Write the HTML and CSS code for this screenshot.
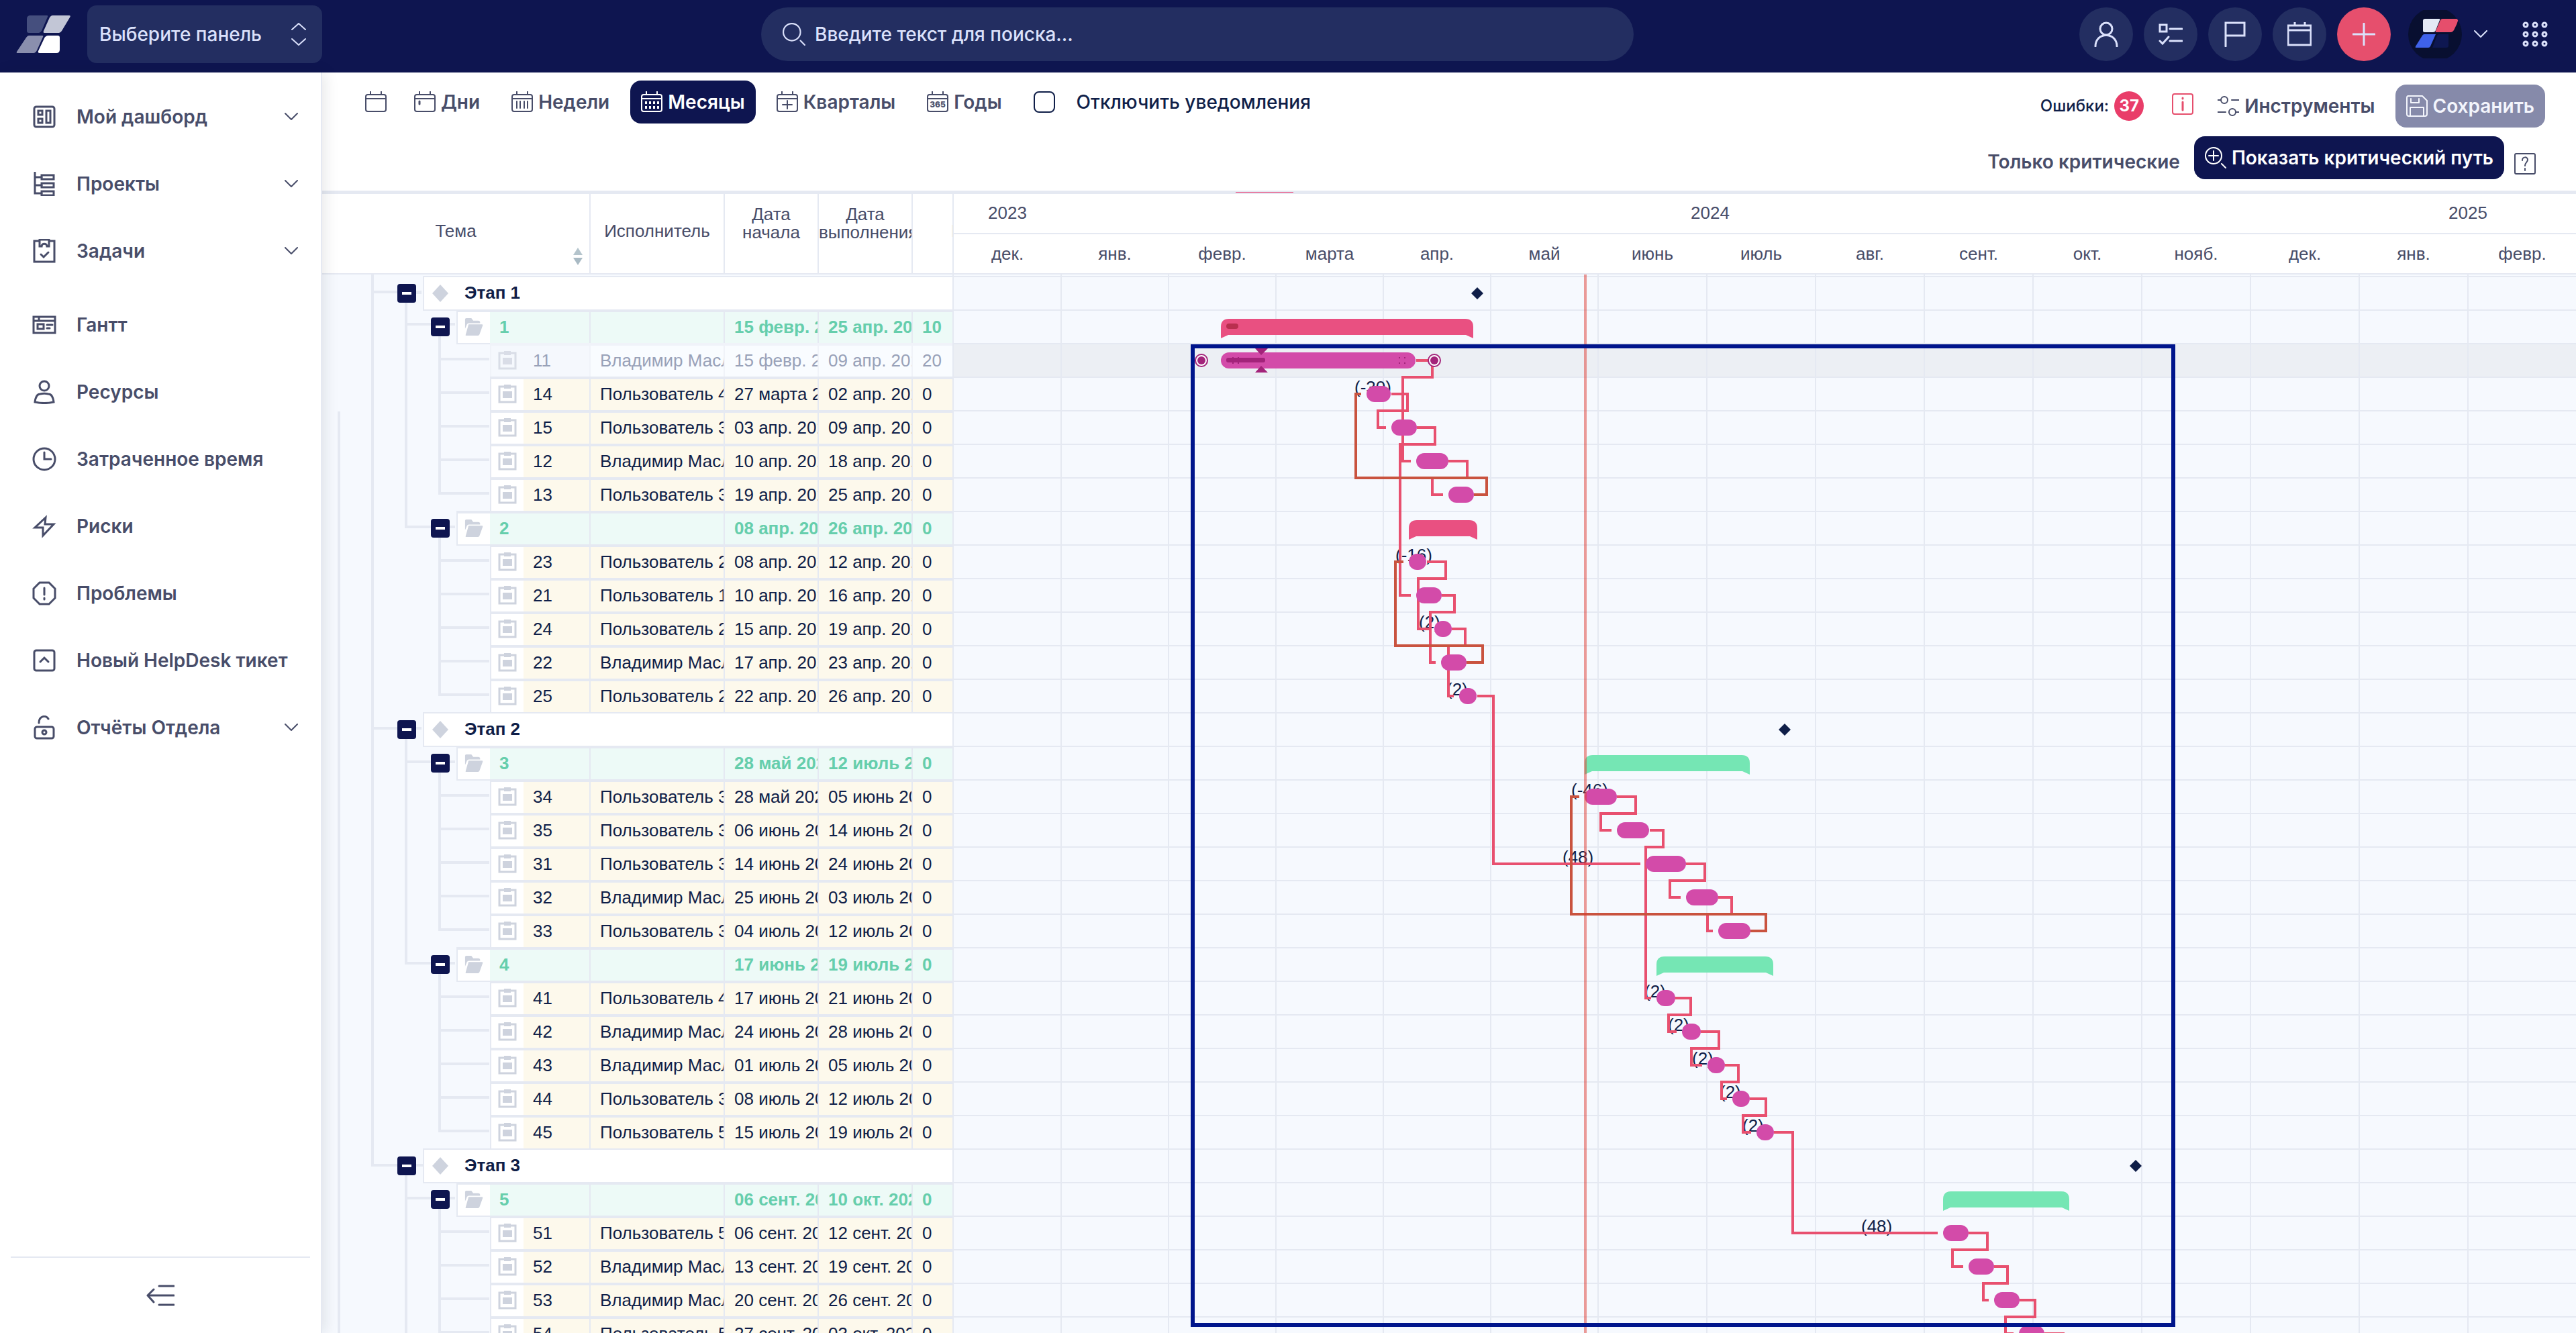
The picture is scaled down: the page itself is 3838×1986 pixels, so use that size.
FILE: index.html
```html
<!DOCTYPE html>
<html lang="ru">
<head>
<meta charset="utf-8">
<title>Гантт</title>
<meta name="viewport" content="width=device-width, initial-scale=1">
<link rel="stylesheet" href="styles.css">
</head>
<body>
<svg class="sprite" aria-hidden="true">
  <symbol id="i-dashboard" viewBox="0 0 36 36"><rect x="3" y="3" width="30" height="30" rx="3"/><rect x="9" y="9" width="6" height="6"/><rect x="9" y="21" width="6" height="6"/><rect x="21" y="9" width="6" height="18"/></symbol>
  <symbol id="i-projects" viewBox="0 0 36 36"><path d="M4 1v31h10M4 8h10M4 20h10"/><rect x="14" y="5" width="18" height="6"/><rect x="14" y="17" width="18" height="6"/><rect x="14" y="29" width="18" height="6"/></symbol>
  <symbol id="i-tasks" viewBox="0 0 36 36"><path d="M10 3H3v31h30V3h-7M13 23l4 4 7-7"/><path d="M11 1h14v10h-3c0-5-8-5-8 0h-3z"/></symbol>
  <symbol id="i-gantt" viewBox="0 0 36 36"><path d="M2 6h32v24H2zM2 12h32M10 6v6M22 18h8M22 23h4"/><rect x="8" y="17" width="9" height="7"/></symbol>
  <symbol id="i-person" viewBox="0 0 36 36"><circle cx="18" cy="9" r="7"/><path d="M4 33c1-8 3-12 8-12 4-1 8-1 12 0 5 0 7 4 8 12-9 2-19 2-28 0z"/></symbol>
  <symbol id="i-clock" viewBox="0 0 36 36"><circle cx="18" cy="18" r="16"/><path d="M18 8v10h10"/></symbol>
  <symbol id="i-bolt" viewBox="0 0 36 36"><path d="M20 5L4 20h12l0 12 16-17H19z"/></symbol>
  <symbol id="i-problem" viewBox="0 0 36 36"><path d="M11 2h14l9 9v14l-9 9H11l-9-9V11zM18 10v10M18 25v2"/></symbol>
  <symbol id="i-ticket" viewBox="0 0 36 36"><rect x="3" y="3" width="30" height="30" rx="3"/><path d="M12 20l6-6 6 6"/></symbol>
  <symbol id="i-lock" viewBox="0 0 36 36"><rect x="4" y="17" width="28" height="17" rx="3"/><circle cx="18" cy="25" r="3"/><path d="M10 11C10 0 21-1 24 5"/></symbol>
  <symbol id="i-chevron" viewBox="0 0 20 12"><path d="M1 1l9 9 9-9"/></symbol>
  <symbol id="i-cal" viewBox="0 0 32 32"><rect x="1" y="5" width="30" height="25" rx="3"/><path d="M1 11h30M8 0v5M24 0v5"/></symbol>
  <symbol id="i-search" viewBox="0 0 32 32"><circle cx="13" cy="13" r="12"/><path d="M25 25l6 6"/></symbol>
  <symbol id="i-milestone" viewBox="0 0 28 28"><path d="M14 1l12 13-12 13L2 14z"/></symbol>
  <symbol id="i-folder" viewBox="0 0 30 28"><path d="M1 17V2q0-2 2-2h8l3 4h8q3 0 3 3v1H7q-2 0-3 2z"/><path d="M7 10h21q2 0 1 2l-5 14q-1 2-3 2H3q-2 0-1-2l4-14q0-2 1-2z"/></symbol>
  <symbol id="i-clip" viewBox="0 0 28 28"><path d="M9 3H2v23h24V3h-7" fill="none" stroke="currentColor" stroke-width="3"/><path d="M9 0h10v6H9zM7 10h14v10H7z"/></symbol>
</svg>

<div class="app">
  <header class="topbar">
    <div class="brand">
      <a class="logo" href="#" aria-label="Главная">
        <svg width="82" height="58" viewBox="0 0 82 58"><path d="M20 1h26q2 0 1 2L38 24q-2 3-4 3H19q-3 0-3-3V6q0-4 4-5z" fill="#454f7e"/><path d="M54 1h25q3 0 1 3L68 24q-2 3-4 3H42q-2 0-1-3l9-20q2-3 4-3z" fill="#c2c6d6"/><path d="M19 31h20q2 0 1 2l-9 20q-2 4-5 4H2q-2 0-1-2l14-21q2-3 4-3z" fill="#8a8fae"/><path d="M48 31h14q3 0 3 3v18q0 5-5 5H35q-3 0-2-3l9-19q2-4 6-4z" fill="#fff"/></svg>
      </a>
      <div class="panel-picker">
        <select aria-label="Панель"><option>Выберите панель</option></select>
        <svg class="stroke" width="22" height="36" viewBox="0 0 22 36"><path d="M1 11L11 2l10 9M1 25l10 9 10-9"/></svg>
      </div>
    </div>
    <label class="search">
      <svg class="stroke" width="34" height="34"><use href="#i-search"/></svg>
      <input type="search" placeholder="Введите текст для поиска..." aria-label="Поиск">
    </label>
    <nav class="actions" aria-label="Быстрые действия">
      <button class="round" aria-label="Пользователи"><svg class="stroke" width="36" height="38" viewBox="0 0 36 38"><circle cx="18" cy="11" r="9"/><path d="M2 37c0-22 32-22 32 0"/></svg></button>
      <button class="round" aria-label="Задачи"><svg class="stroke" width="36" height="32" viewBox="0 0 36 32"><rect x="2" y="2" width="10" height="10"/><path d="M17 8h18M17 26h18M2 26l4 4 9-10"/></svg></button>
      <button class="round" aria-label="Флаг"><svg class="stroke" width="32" height="38" viewBox="0 0 32 38"><path d="M2 37V2h28v19H2"/></svg></button>
      <button class="round" aria-label="Календарь"><svg class="stroke" width="36" height="36" viewBox="0 0 36 36"><path d="M1 5h34v29H1zM1 12h34M11 0v5M26 0v5"/></svg></button>
      <button class="round add" aria-label="Добавить"><svg class="stroke" width="34" height="34" viewBox="0 0 34 34"><path d="M17 1v32M1 17h32"/></svg></button>
      <button class="profile" aria-label="Профиль">
        <svg width="80" height="72" viewBox="0 0 80 72"><clipPath id="av"><circle cx="40" cy="36" r="40"/></clipPath><g clip-path="url(#av)"><rect width="80" height="72" fill="#080f30"/><path d="M25 13h21q2 0 1 2l-6 15q-1 3-4 3H24q-2 0-2-2V16q0-3 3-3z" fill="#e4e9f5"/><path d="M51 13h24q-2 8-7 17-2 3-4 3H42q-2 0-1-2l7-16q1-2 3-2z" fill="#e64e6c"/><path d="M24 36h17l-8 18q-1 2-3 2H12q-2 0-1-2l10-16q1-2 3-2z" fill="#3f62ea"/><path d="M46 36h14v17q0 3-3 3H36l7-18q1-2 3-2z" fill="#0e1751"/></g></svg>
        <svg class="stroke" width="20" height="12"><use href="#i-chevron"/></svg>
      </button>
      <button class="apps" aria-label="Приложения"><svg class="stroke" width="38" height="38" viewBox="0 0 38 38"><circle cx="5" cy="5" r="3"/><circle cx="19" cy="5" r="3"/><circle cx="33" cy="5" r="3"/><circle cx="5" cy="19" r="3"/><circle cx="19" cy="19" r="3"/><circle cx="33" cy="19" r="3"/><circle cx="5" cy="33" r="3"/><circle cx="19" cy="33" r="3"/><circle cx="33" cy="33" r="3"/></svg></button>
    </nav>
  </header>

  <aside class="sidebar">
    <nav class="menu" aria-label="Меню">
      <a href="#"><svg class="icon stroke"><use href="#i-dashboard"/></svg><span>Мой дашборд</span><svg class="chev stroke"><use href="#i-chevron"/></svg></a>
      <a href="#"><svg class="icon stroke"><use href="#i-projects"/></svg><span>Проекты</span><svg class="chev stroke"><use href="#i-chevron"/></svg></a>
      <a href="#"><svg class="icon stroke"><use href="#i-tasks"/></svg><span>Задачи</span><svg class="chev stroke"><use href="#i-chevron"/></svg></a>
    </nav>
    <nav class="menu" aria-label="Модули">
      <a href="#"><svg class="icon stroke"><use href="#i-gantt"/></svg><span>Гантт</span></a>
      <a href="#"><svg class="icon stroke"><use href="#i-person"/></svg><span>Ресурсы</span></a>
      <a href="#"><svg class="icon stroke"><use href="#i-clock"/></svg><span>Затраченное время</span></a>
      <a href="#"><svg class="icon stroke"><use href="#i-bolt"/></svg><span>Риски</span></a>
      <a href="#"><svg class="icon stroke"><use href="#i-problem"/></svg><span>Проблемы</span></a>
      <a href="#"><svg class="icon stroke"><use href="#i-ticket"/></svg><span>Новый HelpDesk тикет</span></a>
      <a href="#"><svg class="icon stroke"><use href="#i-lock"/></svg><span>Отчёты Отдела</span><svg class="chev stroke"><use href="#i-chevron"/></svg></a>
    </nav>
    <button class="collapse" aria-label="Свернуть меню"><svg class="stroke" width="42" height="34" viewBox="0 0 42 34"><path d="M19 3h22M2 17h39M19 31h22M11 8l-9 9 9 10"/></svg></button>
  </aside>

  <main class="workspace">
    <div class="toolbar">
      <div class="zoom">
        <button class="btn today" aria-label="Сегодня"><svg class="ic"><use href="#i-cal"/></svg></button>
        <button class="btn"><svg class="ic" viewBox="0 0 32 32"><use href="#i-cal"/><path d="M8 15v4" stroke-width="3"/></svg>Дни</button>
        <button class="btn"><svg class="ic" viewBox="0 0 32 32"><use href="#i-cal"/><path d="M8 15v10M13 15v10M19 15v10M24 15v10"/></svg>Недели</button>
        <button class="btn active" aria-pressed="true"><svg class="ic" viewBox="0 0 32 32"><use href="#i-cal"/><path class="dots" d="M6 17h3M12 17h3M18 17h3M24 17h3M6 24h3M12 24h3M18 24h3M24 24h3"/></svg>Месяцы</button>
        <button class="btn"><svg class="ic" viewBox="0 0 32 32"><use href="#i-cal"/><path d="M9 20h14M16 14v12"/></svg>Кварталы</button>
        <button class="btn"><svg class="ic" viewBox="0 0 32 32"><use href="#i-cal"/><text x="16" y="24" class="ic-text">365</text></svg>Годы</button>
        <label class="mute"><input type="checkbox">Отключить уведомления</label>
      </div>
      <div class="tools">
        <div class="tool-row">
          <span class="errors">Ошибки: <b class="badge">37</b></span>
          <button class="btn info" aria-label="Информация"><svg class="ic" viewBox="0 0 32 32"><rect x="1" y="1" width="30" height="30" rx="3"/><path d="M16 13v12M16 7v1" stroke-width="3"/></svg></button>
          <button class="btn"><svg class="ic" viewBox="0 0 32 32"><circle cx="10" cy="7" r="5"/><circle cx="22" cy="25" r="5"/><path d="M0 7h5M21 7h11M0 25h12M27 25h5"/></svg>Инструменты</button>
          <button class="btn save" disabled><svg class="ic" viewBox="0 0 32 32"><path d="M3 1h21l7 7v20q0 3-3 3H4q-3 0-3-3V4q0-3 2-3zM7 5v6h12V5M6 31V18h20v13"/></svg>Сохранить</button>
        </div>
        <div class="tool-row second">
          <button class="btn only">Только критические</button>
          <button class="btn active"><svg class="ic" viewBox="0 0 32 32"><use href="#i-search"/><path d="M6 13h14M13 6v14"/></svg>Показать критический путь</button>
          <button class="help" aria-label="Справка"><svg class="ic" viewBox="0 0 32 32"><rect x="1" y="1" width="30" height="30" rx="2"/><path d="M12 11c0-6 8-6 8-1 0 4-4 4-4 9M16 23v3"/></svg></button>
        </div>
      </div>
    </div>
    <div class="seam"><span></span></div>

    <div class="gantt">
      <div class="grid">
        <svg class="tree" aria-hidden="true"><path d="M75 120v1327h137M112 147H148M25 324V1700M125 162v1V496h73M125 194h73M175 210v236h74M175 246h74M175 296h74M175 346h74M175 396h74M175 510v236h74M175 546h74M175 596h74M175 646h74M175 696h74M75 146h73M75 796h73M125 812v334h73M125 846h73M175 860v236h74M175 896h74M175 946h74M175 996h74M175 1046h74M175 1160v236h74M175 1196h74M175 1246h74M175 1296h74M175 1346h74M125 1462v300M125 1496h73M175 1510v200M175 1546h74M175 1596h74M175 1646h74M175 1696h74"/></svg>
        <table>
          <colgroup><col class="c-subject"><col class="c-user"><col class="c-date"><col class="c-date"><col class="c-done"></colgroup>
          <thead>
            <tr>
              <th scope="col">Тема<svg class="sort" viewBox="0 0 14 26"><path d="M7 0l7 11H0z" fill="#b4c4cc"/><path d="M0 15h14l-7 11z" fill="#a9bac4"/></svg></th>
              <th scope="col">Исполнитель</th><th scope="col" class="h-date">Дата<br>начала</th><th scope="col" class="h-date">Дата<br>выполнения</th><th scope="col" class="h-done">Готово</th>
            </tr>
          </thead>
          <tbody>
            <tr class="gap"><td colspan="5"></td></tr>
            <tr class="stage"><td colspan="5"><div class="node"><button class="tg" aria-label="Свернуть"></button><div class="box"><svg><use href="#i-milestone"/></svg><span>Этап 1</span></div></div></td></tr>
            <tr class="group"><td><div class="node"><button class="tg" aria-label="Свернуть"></button><div class="box"><svg><use href="#i-folder"/></svg><span>1</span></div></div></td><td></td><td>15 февр. 2024</td><td>25 апр. 2024</td><td>10</td></tr>
            <tr class="task picked"><td><div class="node"><div class="box"><svg><use href="#i-clip"/></svg><span>11</span></div></div></td><td>Владимир Маслов</td><td>15 февр. 2024</td><td>09 апр. 2024</td><td>20</td></tr>
            <tr class="task"><td><div class="node"><div class="box"><svg><use href="#i-clip"/></svg><span>14</span></div></div></td><td>Пользователь 4</td><td>27 марта 2024</td><td>02 апр. 2024</td><td>0</td></tr>
            <tr class="task"><td><div class="node"><div class="box"><svg><use href="#i-clip"/></svg><span>15</span></div></div></td><td>Пользователь 3</td><td>03 апр. 2024</td><td>09 апр. 2024</td><td>0</td></tr>
            <tr class="task"><td><div class="node"><div class="box"><svg><use href="#i-clip"/></svg><span>12</span></div></div></td><td>Владимир Маслов</td><td>10 апр. 2024</td><td>18 апр. 2024</td><td>0</td></tr>
            <tr class="task"><td><div class="node"><div class="box"><svg><use href="#i-clip"/></svg><span>13</span></div></div></td><td>Пользователь 3</td><td>19 апр. 2024</td><td>25 апр. 2024</td><td>0</td></tr>
            <tr class="group"><td><div class="node"><button class="tg" aria-label="Свернуть"></button><div class="box"><svg><use href="#i-folder"/></svg><span>2</span></div></div></td><td></td><td>08 апр. 2024</td><td>26 апр. 2024</td><td>0</td></tr>
            <tr class="task"><td><div class="node"><div class="box"><svg><use href="#i-clip"/></svg><span>23</span></div></div></td><td>Пользователь 2</td><td>08 апр. 2024</td><td>12 апр. 2024</td><td>0</td></tr>
            <tr class="task"><td><div class="node"><div class="box"><svg><use href="#i-clip"/></svg><span>21</span></div></div></td><td>Пользователь 1</td><td>10 апр. 2024</td><td>16 апр. 2024</td><td>0</td></tr>
            <tr class="task"><td><div class="node"><div class="box"><svg><use href="#i-clip"/></svg><span>24</span></div></div></td><td>Пользователь 2</td><td>15 апр. 2024</td><td>19 апр. 2024</td><td>0</td></tr>
            <tr class="task"><td><div class="node"><div class="box"><svg><use href="#i-clip"/></svg><span>22</span></div></div></td><td>Владимир Маслов</td><td>17 апр. 2024</td><td>23 апр. 2024</td><td>0</td></tr>
            <tr class="task"><td><div class="node"><div class="box"><svg><use href="#i-clip"/></svg><span>25</span></div></div></td><td>Пользователь 2</td><td>22 апр. 2024</td><td>26 апр. 2024</td><td>0</td></tr>
            <tr class="stage"><td colspan="5"><div class="node"><button class="tg" aria-label="Свернуть"></button><div class="box"><svg><use href="#i-milestone"/></svg><span>Этап 2</span></div></div></td></tr>
            <tr class="group"><td><div class="node"><button class="tg" aria-label="Свернуть"></button><div class="box"><svg><use href="#i-folder"/></svg><span>3</span></div></div></td><td></td><td>28 май 2024</td><td>12 июль 2024</td><td>0</td></tr>
            <tr class="task"><td><div class="node"><div class="box"><svg><use href="#i-clip"/></svg><span>34</span></div></div></td><td>Пользователь 3</td><td>28 май 2024</td><td>05 июнь 2024</td><td>0</td></tr>
            <tr class="task"><td><div class="node"><div class="box"><svg><use href="#i-clip"/></svg><span>35</span></div></div></td><td>Пользователь 3</td><td>06 июнь 2024</td><td>14 июнь 2024</td><td>0</td></tr>
            <tr class="task"><td><div class="node"><div class="box"><svg><use href="#i-clip"/></svg><span>31</span></div></div></td><td>Пользователь 3</td><td>14 июнь 2024</td><td>24 июнь 2024</td><td>0</td></tr>
            <tr class="task"><td><div class="node"><div class="box"><svg><use href="#i-clip"/></svg><span>32</span></div></div></td><td>Владимир Маслов</td><td>25 июнь 2024</td><td>03 июль 2024</td><td>0</td></tr>
            <tr class="task"><td><div class="node"><div class="box"><svg><use href="#i-clip"/></svg><span>33</span></div></div></td><td>Пользователь 3</td><td>04 июль 2024</td><td>12 июль 2024</td><td>0</td></tr>
            <tr class="group"><td><div class="node"><button class="tg" aria-label="Свернуть"></button><div class="box"><svg><use href="#i-folder"/></svg><span>4</span></div></div></td><td></td><td>17 июнь 2024</td><td>19 июль 2024</td><td>0</td></tr>
            <tr class="task"><td><div class="node"><div class="box"><svg><use href="#i-clip"/></svg><span>41</span></div></div></td><td>Пользователь 4</td><td>17 июнь 2024</td><td>21 июнь 2024</td><td>0</td></tr>
            <tr class="task"><td><div class="node"><div class="box"><svg><use href="#i-clip"/></svg><span>42</span></div></div></td><td>Владимир Маслов</td><td>24 июнь 2024</td><td>28 июнь 2024</td><td>0</td></tr>
            <tr class="task"><td><div class="node"><div class="box"><svg><use href="#i-clip"/></svg><span>43</span></div></div></td><td>Владимир Маслов</td><td>01 июль 2024</td><td>05 июль 2024</td><td>0</td></tr>
            <tr class="task"><td><div class="node"><div class="box"><svg><use href="#i-clip"/></svg><span>44</span></div></div></td><td>Пользователь 3</td><td>08 июль 2024</td><td>12 июль 2024</td><td>0</td></tr>
            <tr class="task"><td><div class="node"><div class="box"><svg><use href="#i-clip"/></svg><span>45</span></div></div></td><td>Пользователь 5</td><td>15 июль 2024</td><td>19 июль 2024</td><td>0</td></tr>
            <tr class="stage"><td colspan="5"><div class="node"><button class="tg" aria-label="Свернуть"></button><div class="box"><svg><use href="#i-milestone"/></svg><span>Этап 3</span></div></div></td></tr>
            <tr class="group"><td><div class="node"><button class="tg" aria-label="Свернуть"></button><div class="box"><svg><use href="#i-folder"/></svg><span>5</span></div></div></td><td></td><td>06 сент. 2024</td><td>10 окт. 2024</td><td>0</td></tr>
            <tr class="task"><td><div class="node"><div class="box"><svg><use href="#i-clip"/></svg><span>51</span></div></div></td><td>Пользователь 5</td><td>06 сент. 2024</td><td>12 сент. 2024</td><td>0</td></tr>
            <tr class="task"><td><div class="node"><div class="box"><svg><use href="#i-clip"/></svg><span>52</span></div></div></td><td>Владимир Маслов</td><td>13 сент. 2024</td><td>19 сент. 2024</td><td>0</td></tr>
            <tr class="task"><td><div class="node"><div class="box"><svg><use href="#i-clip"/></svg><span>53</span></div></div></td><td>Владимир Маслов</td><td>20 сент. 2024</td><td>26 сент. 2024</td><td>0</td></tr>
            <tr class="task"><td><div class="node"><div class="box"><svg><use href="#i-clip"/></svg><span>54</span></div></div></td><td>Пользователь 5</td><td>27 сент. 2024</td><td>03 окт. 2024</td><td>0</td></tr>
          </tbody>
        </table>
      </div>

      <div class="timeline">
        <div class="scale">
          <span class="y23">2023</span><span class="y24">2024</span><span class="y25">2025</span>
          <span>дек.</span><span>янв.</span><span>февр.</span><span>марта</span><span>апр.</span><span>май</span><span>июнь</span><span>июль</span><span>авг.</span><span>сент.</span><span>окт.</span><span>нояб.</span><span>дек.</span><span>янв.</span><span>февр.</span>
        </div>
        <div class="picked-band"></div>
        <svg class="chart" role="img" aria-label="Диаграмма Гантта">
          <g transform="translate(-1421 -409)">
            <path class="months" d="M1581 409v1600M1741 409v1600M1901 409v1600M2061 409v1600M2221 409v1600M2381 409v1600M2543 409v1600M2705 409v1600M2867 409v1600M3029 409v1600M3191 409v1600M3353 409v1600M3515 409v1600M3677 409v1600"/>
            <g class="lags">
              <text x="2018" y="586">(-30)</text><text x="2079" y="836">(-16)</text><text x="2114" y="936">(2)</text><text x="2155" y="1036">(2)</text><text x="2341" y="1186">(-46)</text><text x="2328" y="1286">(48)</text><text x="2450" y="1486">(2)</text><text x="2485" y="1536">(2)</text><text x="2521" y="1586">(2)</text><text x="2562" y="1636">(2)</text><text x="2596" y="1686">(2)</text><text x="2773" y="1836">(48)</text>
            </g>
            <path class="link" d="M2110 537H2134V562H2090V687H2102M2073 587H2097V612H2053V637H2065M2111 637H2138V662H2086V887H2102M2158 687H2186V712H2134V737H2150M2126 837H2154V862H2113V937H2131M2148 887H2167V912H2131V987H2139M2163 937H2183V962H2158V1037H2166M2201 1037H2225V1287H2444M2409 1187H2437V1212H2385V1237H2401M2458 1237H2478V1262H2452V1487H2460M2512 1287H2540V1312H2488V1337H2504M2560 1337H2580V1362H2544V1387H2552M2496 1487H2519V1512H2486V1537H2498M2534 1537H2561V1562H2520V1587H2536M2570 1587H2590V1612H2565V1637H2573M2607 1637H2631V1662H2597V1687H2609M2643 1687H2671V1837H2887M2933 1837H2961V1862H2909V1887H2925M2971 1887H2991V1912H2955V1937H2963M3009 1937H3032V1962H2988V1987H3000M3046 1987H3076"/>
            <path class="link back" d="M2196 737H2215V712H2020V587H2028M2185 987H2209V962H2079V837H2091M2608 1387H2631V1362H2341V1187H2353"/>
            <g class="bars">
              <rect x="1819" y="525" width="290" height="24" rx="12"/><rect x="2036" y="575" width="36" height="24" rx="12"/><rect x="2073" y="625" width="38" height="24" rx="12"/><rect x="2110" y="675" width="48" height="24" rx="12"/><rect x="2158" y="725" width="38" height="24" rx="12"/>
              <rect x="2099" y="825" width="26" height="24" rx="12"/><rect x="2110" y="875" width="38" height="24" rx="12"/><rect x="2137" y="925" width="26" height="24" rx="12"/><rect x="2147" y="975" width="38" height="24" rx="12"/><rect x="2174" y="1025" width="26" height="24" rx="12"/>
              <rect x="2361" y="1175" width="48" height="24" rx="12"/><rect x="2409" y="1225" width="48" height="24" rx="12"/><rect x="2452" y="1275" width="60" height="24" rx="12"/><rect x="2512" y="1325" width="48" height="24" rx="12"/><rect x="2560" y="1375" width="48" height="24" rx="12"/>
              <rect x="2468" y="1475" width="28" height="24" rx="12"/><rect x="2506" y="1525" width="28" height="24" rx="12"/><rect x="2544" y="1575" width="26" height="24" rx="12"/><rect x="2581" y="1625" width="26" height="24" rx="12"/><rect x="2617" y="1675" width="26" height="24" rx="12"/>
              <rect x="2895" y="1825" width="38" height="24" rx="12"/><rect x="2933" y="1875" width="38" height="24" rx="12"/><rect x="2971" y="1925" width="38" height="24" rx="12"/><rect x="3008" y="1975" width="38" height="24" rx="12"/>
            </g>
            <path class="late" d="M1819 504V487q0-12 12-12H2183q12 0 12 12V504l-11-5H1830zM2099 804V787q0-12 12-12H2189q12 0 12 12V804l-11-5H2110z"/>
            <rect x="1827" y="482" width="18" height="8" rx="4" fill="#b92f4f"/>
            <path class="fine" d="M2361 1154V1137q0-12 12-12H2595q12 0 12 12V1154l-11-5H2372zM2468 1454V1437q0-12 12-12H2630q12 0 12 12V1454l-11-5H2479zM2895 1804V1787q0-12 12-12H3071q12 0 12 12V1804l-11-5H2906z"/>
            <path class="stone" d="M2201 428l9 9-9 9-9-9zM2659 1078l9 9-9 9-9-9zM3182 1728l9 9-9 9-9-9z"/>
            <g class="grip">
              <rect x="1827" y="533" width="58" height="7" rx="3"/>
              <path d="M1870 519h19l-10 10zM1870 555h19l-10-10zM1836 532h2v2h-2zM1844 532h2v2h-2zM1836 540h2v2h-2zM1844 540h2v2h-2zM2084 532h2v2h-2zM2092 532h2v2h-2zM2084 540h2v2h-2zM2092 540h2v2h-2z"/>
              <circle cx="1790" cy="537" r="9" class="ring"/><circle cx="1790" cy="537" r="6"/>
              <circle cx="2137" cy="537" r="9" class="ring"/><circle cx="2137" cy="537" r="6"/>
            </g>
            <path class="now" d="M2362 409v1600"/>
            <rect class="frame" x="1777" y="516" width="1461" height="1458"/>
          </g>
        </svg>
      </div>
    </div>
  </main>
</div>
</body>
</html>
```
FILE: styles.css
```css
:root {
  --navy: #0e1550;
  --navy-soft: #232e61;
  --ink: #0f1e48;
  --text: #484d69;
  --pale: #dbe1fb;
  --line: #e5e9f2;
  --canvas: #f6f9fe;
  --red: #e64f6d;
}

* { box-sizing: border-box; }

body {
  margin: 0;
  font: 500 28px/40px Inter, "Noto Sans", sans-serif;
  color: var(--text);
  background: #fff;
}

button, input, select { font: inherit; color: inherit; }
button { border: 0; background: none; padding: 0; cursor: pointer; }
a { color: inherit; text-decoration: none; }
svg { display: block; flex: none; }

.sprite { position: absolute; width: 0; height: 0; }

.stroke, .ic {
  fill: none;
  stroke: currentColor;
  stroke-width: 2;
  stroke-linecap: round;
  stroke-linejoin: round;
}

.app {
  display: grid;
  grid-template: auto minmax(0, 1fr) / 480px minmax(0, 1fr);
  height: 100vh;
  overflow: hidden;
}

/* Top bar */
.topbar {
  grid-column: 1 / -1;
  display: grid;
  grid-template-columns: 480px minmax(0, 1fr) auto;
  align-items: center;
  height: 108px;
  padding-bottom: 6px;
  background: var(--navy);
  color: var(--pale);
}
.brand { display: flex; align-items: center; justify-content: space-between; padding-left: 24px; }
.panel-picker { display: grid; align-items: center; width: 350px; height: 86px; }
.panel-picker > * { grid-area: 1 / 1; }
.panel-picker select {
  appearance: none;
  width: 100%;
  height: 86px;
  padding: 0 64px 0 18px;
  border: 0;
  border-radius: 14px;
  background: var(--navy-soft);
}
.panel-picker svg { justify-self: end; margin-right: 24px; pointer-events: none; }
.search {
  justify-self: center;
  display: flex;
  align-items: center;
  gap: 14px;
  width: 1300px;
  max-width: 100%;
  height: 80px;
  padding: 0 32px;
  border-radius: 40px;
  background: var(--navy-soft);
}
.search input { flex: 1; border: 0; outline: 0; background: none; padding: 0; }
.search input::placeholder { color: var(--pale); opacity: 1; }
.actions { display: flex; align-items: center; gap: 16px; padding: 0 42px 0 10px; }
.round {
  display: grid;
  place-items: center;
  width: 80px;
  height: 80px;
  border-radius: 50%;
  background: var(--navy-soft);
}
.round svg { stroke-width: 3; stroke-linejoin: miter; }
.round.add { background: var(--red); }
.profile { display: flex; align-items: center; gap: 18px; margin-left: 10px; }
.apps { margin-left: 36px; }
.apps svg { stroke-width: 3; }

/* Sidebar */
.sidebar {
  position: relative;
  z-index: 2;
  display: flex;
  flex-direction: column;
  padding-top: 16px;
  border-right: 2px solid var(--line);
  background: #fff;
  box-shadow: 4px 0 20px rgba(20, 30, 40, .1);
}
.menu { display: flex; flex-direction: column; margin-bottom: 10px; font-weight: 600; }
.menu a { display: flex; align-items: center; height: 100px; padding: 0 34px 0 48px; gap: 30px; }
.menu span { flex: 1; white-space: nowrap; }
.menu .icon { width: 36px; height: 36px; stroke-width: 3; stroke-linejoin: miter; }
.menu .chev { width: 20px; height: 12px; }
.collapse {
  display: grid;
  place-items: center;
  height: 114px;
  margin: auto 16px 0;
  border-top: 2px solid var(--line);
}
.collapse svg { stroke-width: 3; }

/* Toolbar */
.workspace { display: flex; flex-direction: column; min-width: 0; min-height: 0; overflow: hidden; }
.toolbar { display: flex; justify-content: space-between; height: 176px; padding: 12px 46px 0 48px; }
.zoom { display: flex; gap: 15px; height: 64px; }
.btn {
  display: flex;
  align-items: center;
  gap: 8px;
  height: 64px;
  padding: 0 16px;
  border-radius: 16px;
  font-weight: 600;
  white-space: nowrap;
}
.ic { width: 32px; height: 32px; }
.ic .dots { stroke-width: 4; stroke-linecap: butt; }
.ic-text { fill: currentColor; stroke: none; font-size: 12px; font-weight: 800; text-anchor: middle; }
.btn.today { padding-right: 10px; }
.btn.active { background: var(--navy); color: #fff; }
.btn.save { background: #868aaa; color: #f3f5fc; }
.btn.info { color: var(--red); padding: 0 20px 6px 42px; }
.mute { display: flex; align-items: center; gap: 32px; margin-left: 16px; color: var(--ink); }
.mute input {
  appearance: none;
  width: 32px;
  height: 32px;
  margin: 0;
  border: 2px solid var(--ink);
  border-radius: 8px;
  background: #fff;
}
.tools { display: flex; flex-direction: column; gap: 13px; padding-top: 6px; }
.tool-row { display: flex; align-items: center; justify-content: flex-end; }
.tool-row .save { margin-left: 14px; }
.errors { display: flex; align-items: center; gap: 8px; color: var(--ink); font-size: 24px; }
.badge {
  width: 44px;
  height: 44px;
  border-radius: 50%;
  background: #e93d69;
  color: #fff;
  font-weight: 700;
  line-height: 44px;
  text-align: center;
}
.second { padding-right: 14px; gap: 15px; }
.second .only { margin-right: -10px; padding-top: 12px; }
.help { padding-top: 18px; }

.seam {
  height: 5px;
  padding: 2px 0 2px 1361px;
  background: var(--line);
}
.seam span { display: block; width: 86px; height: 1px; background: #e95081; }

/* Gantt */
.gantt {
  display: flex;
  flex: 1;
  min-height: 0;
  overflow: hidden;
  background: var(--canvas);
  font: 400 26px/44px "Liberation Sans", Arial, sans-serif;
}
.grid { position: relative; flex: none; width: 941px; overflow: hidden; }
.tree { position: absolute; inset: 0; width: 941px; height: 100%; }
.tree path { fill: none; stroke: var(--line); stroke-width: 4; }
table { position: relative; width: 100%; table-layout: fixed; border-spacing: 0; border-right: 2px solid var(--line); }
.c-subject { width: 398px; }
.c-user { width: 200px; }
.c-date { width: 140px; }
.c-done { width: 61px; }
th {
  position: relative;
  height: 120px;
  padding: 0 0 8px;
  overflow: hidden;
  border-left: 2px solid var(--line);
  border-bottom: 2px solid var(--line);
  background: #fff;
  font-weight: 400;
  line-height: 27px;
  vertical-align: middle;
  white-space: nowrap;
}
th:first-child { border-left: 0; }
th.h-date { padding-bottom: 30px; }
th.h-done { padding-left: 57px; text-align: left; }
.sort { position: absolute; right: 10px; bottom: 12px; width: 14px; height: 26px; }

td {
  height: 50px;
  padding: 0 0 0 14px;
  overflow: hidden;
  border-left: 2px solid var(--line);
  border-top: 4px solid var(--line);
  color: var(--ink);
  vertical-align: top;
  white-space: nowrap;
}
td:first-child { padding: 0; border: 0; overflow: visible; }
.gap td { height: 2px; }
.node { display: flex; height: 50px; }
.box {
  display: flex;
  flex: 1;
  border-left: 2px solid var(--line);
  border-top: 4px solid var(--line);
  background: #fff;
}
.stage .box { border-top-width: 2px; }
.stage .box, .group .box { box-shadow: 0 2px 0 var(--line); }
.box svg { width: 28px; height: 28px; margin: 8px 10px; fill: #ced3de; color: #ced3de; }
.box span { flex: 1; padding-left: 14px; }
.stage .box span { padding-left: 12px; font-weight: 700; line-height: 46px; }
.stage .box svg { margin-top: 10px; }
.tg {
  position: relative;
  width: 28px;
  height: 28px;
  margin-top: 12px;
  border-radius: 4px;
  background: var(--navy);
}
.tg::after { content: ""; display: block; width: 14px; height: 4px; margin: 0 auto; background: #fff; }
.stage .tg { margin-left: 112px; margin-right: 10px; }
.group .tg { margin-left: 162px; margin-right: 10px; }
.task .node { padding-left: 250px; }
.group td { color: #66ceac; font-weight: 700; }
.group .box span, .group td:not(:first-child) { background: #edfaf7; }
.task .box span, .task td:not(:first-child) { background: #fdf9ec; }
.task.picked .box, .task.picked .box span { background: #f5f8fd; }
.task.picked td:not(:first-child) { background: #f9fcff; }
.task.picked td { color: #98a1b8; }
.task.picked .box svg { opacity: .7; }
.task.picked .box, .task.picked td { border-color: #f0f3f9; }

.timeline { display: flex; flex: 1; flex-direction: column; position: relative; min-width: 0; overflow: hidden; }
.scale {
  display: grid;
  grid-template-columns: 160px repeat(5, 160px) repeat(9, 162px);
  grid-template-rows: 60px 58px;
  height: 120px;
  border-bottom: 2px solid var(--line);
  background: #fff;
  line-height: 58px;
  text-align: center;
}
.scale span { border-bottom: 2px solid var(--line); line-height: 56px; }
.scale span:nth-child(n + 4) { border: 0; line-height: 58px; }
.y24 { grid-column: span 12; }
.y25 { grid-column: span 2; }
.picked-band { position: absolute; top: 224px; left: 0; right: 0; height: 48px; background: #eceff4; }
.chart {
  position: relative;
  flex: 1;
  width: 100%;
  min-height: 0;
  background: repeating-linear-gradient(var(--line) 0 2px, transparent 2px 50px) 0 2px;
}
.chart path { stroke-width: 0; }
.chart .months { stroke: var(--line); stroke-width: 2; }
.lags { fill: var(--ink); }
.chart .link { fill: none; stroke: #e8506f; stroke-width: 4; }
.chart .back { stroke: #c9533f; }
.bars { fill: #d34ba9; }
.late { fill: #e95081; }
.fine { fill: #75e6b4; }
.stone { fill: var(--ink); }
.grip { fill: #a3237a; }
.ring { fill: #fff; stroke: #a3237a; stroke-width: 2; }
.chart .now { stroke: rgba(222, 60, 50, .5); stroke-width: 4; }
.frame { fill: none; stroke: #00158c; stroke-width: 6; }
```
